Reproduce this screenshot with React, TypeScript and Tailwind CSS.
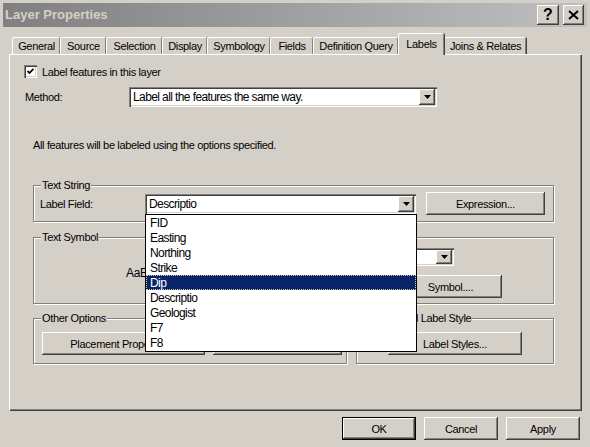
import { ReactNode } from 'react';

const raised =
  'bg-[#d4d0c8] shadow-[inset_-1px_-1px_0_#404040,inset_1px_1px_0_#fff,inset_-2px_-2px_0_#808080]';
const sunken =
  'shadow-[inset_1px_1px_0_#808080,inset_2px_2px_0_#404040,inset_-1px_-1px_0_#fff,inset_-2px_-2px_0_#d4d0c8]';

const tabs = [
  { name: 'General', w: 'w-[48px]' },
  { name: 'Source', w: 'w-[46px]' },
  { name: 'Selection', w: 'w-[56px]' },
  { name: 'Display', w: 'w-[45px]' },
  { name: 'Symbology', w: 'w-[63px]' },
  { name: 'Fields', w: 'w-[43px]' },
  { name: 'Definition Query', w: 'w-[85px]' },
  { name: 'Labels', w: 'w-[46px]', active: true },
  { name: 'Joins & Relates', w: 'w-[82px]' },
];

const fields = ['FID', 'Easting', 'Northing', 'Strike', 'Dip', 'Descriptio', 'Geologist', 'F7', 'F8'];

function Arrow() {
  return (
    <svg width="7" height="4" viewBox="0 0 7 4">
      <path d="M0 0h7L3.5 4z" fill="#000" />
    </svg>
  );
}

function Combo({ text, className }: { text: string; className: string }) {
  return (
    <div className={`flex bg-white p-[2px] ${sunken} ${className}`}>
      <div className="flex-1 flex items-center pl-[2px] text-[12px] tracking-[-0.6px] overflow-hidden whitespace-nowrap">
        {text}
      </div>
      <div className={`w-[16px] h-full flex items-center justify-center ${raised}`}>
        <Arrow />
      </div>
    </div>
  );
}

function Button({ children, className, def }: { children: ReactNode; className: string; def?: boolean }) {
  return (
    <div
      className={`flex items-center justify-center ${raised} ${def ? 'border border-black' : ''} ${className}`}
    >
      {children}
    </div>
  );
}

function Group({ title, className, children }: { title: string; className: string; children?: ReactNode }) {
  return (
    <div
      className={`relative border border-[#808080] shadow-[inset_1px_1px_0_#fff,1px_1px_0_#fff] ${className}`}
    >
      <span className="absolute top-[-8px] left-[7px] px-[1px] bg-[#d4d0c8] leading-[14px]">{title}</span>
      {children}
    </div>
  );
}

export default function App() {
  return (
    <div
      className="relative w-[590px] h-[447px] overflow-hidden bg-[#d4d0c8] text-black text-[11px] tracking-[-0.35px] leading-[14px]"
      style={{ fontFamily: '"Liberation Sans", Arial, sans-serif' }}
    >
      {/* title bar */}
      <div className="mx-[3px] mt-[3px] h-[24px] flex items-center justify-between bg-gradient-to-r from-[#808080] to-[#c0c0c0]">
        <span className="pl-[2px] text-[13px] font-bold tracking-normal text-[#d4d0c8]">Layer Properties</span>
        <div className="flex gap-[4px] pr-[3px]">
          <div className={`w-[22px] h-[20px] flex items-center justify-center text-[16px] font-bold tracking-normal ${raised}`}>
            ?
          </div>
          <div className={`w-[21px] h-[20px] flex items-center justify-center ${raised}`}>
            <svg width="11" height="10" viewBox="0 0 11 10">
              <path d="M1 1l9 8M10 1l-9 8" stroke="#000" strokeWidth="2" />
            </svg>
          </div>
        </div>
      </div>

      {/* tabs */}
      <div className="h-[27px] flex items-end pl-[12px]">
        {tabs.map((t) =>
          t.active ? (
            <div
              key={t.name}
              className={`${t.w} relative z-10 -mb-px h-[22px] flex justify-center pt-[3px] bg-[#d4d0c8] border-l border-t border-white rounded-t-[2px] shadow-[inset_-1px_0_0_#808080,1px_0_0_#404040]`}
            >
              {t.name}
            </div>
          ) : (
            <div
              key={t.name}
              className={`${t.w} h-[17px] flex items-center justify-center border-l border-t border-white rounded-t-[2px] shadow-[inset_-1px_0_0_#808080,1px_0_0_#404040]`}
            >
              {t.name}
            </div>
          )
        )}
      </div>

      {/* panel */}
      <div className="ml-[9px] w-[572px] h-[356px] border-l border-t border-white shadow-[inset_-1px_-1px_0_#808080,1px_1px_0_#404040] flex flex-col pt-[10px] pl-[14px]">
        <div className="h-[13px] flex items-center">
          <div className={`w-[13px] h-[13px] bg-white flex items-center justify-center ${sunken}`}>
            <svg width="7" height="7" viewBox="0 0 7 7">
              <path d="M0.5 3l2 2 4-4.2" stroke="#000" strokeWidth="1.8" fill="none" />
            </svg>
          </div>
          <span className="ml-[5px]">Label features in this layer</span>
        </div>

        <div className="mt-[9px] h-[20px] flex items-center">
          <span className="ml-[1px] w-[104px]">Method:</span>
          <Combo text="Label all the features the same way." className="w-[308px] h-[20px]" />
        </div>

        <div className="mt-[31px] ml-[9px]">All features will be labeled using the options specified.</div>

        <Group title="Text String" className="mt-[33px] ml-[9px] w-[521px] h-[37px] flex items-center pl-[6px]">
          <span className="w-[105px]">Label Field:</span>
          <Combo text="Descriptio" className="w-[271px] h-[20px]" />
          <Button className="ml-[10px] w-[119px] h-[23px]">Expression...</Button>
        </Group>

        <Group title="Text Symbol" className="mt-[15px] ml-[9px] w-[521px] h-[67px] flex">
          <div className="w-[215px] flex items-center pl-[92px] pt-[4px] text-[12px]">AaBbYyZz</div>
          <div className="flex flex-col pt-[10px]">
            <Combo text="Arial" className="w-[205px] h-[18px]" />
            <Button className="mt-[9px] ml-[150px] w-[103px] h-[23px]">Symbol....</Button>
          </div>
        </Group>

        <div className="mt-[14px] ml-[9px] flex">
          <Group title="Other Options" className="w-[314px] h-[46px] flex pl-[8px] pt-[13px] gap-[8px]">
            <Button className="w-[163px] h-[23px]">Placement Properties...</Button>
            <Button className="w-[129px] h-[23px]">Scale Range...</Button>
          </Group>
          <Group title="Pre-defined Label Style" className="ml-[9px] w-[198px] h-[46px] flex justify-center pt-[13px]">
            <Button className="w-[134px] h-[23px]">Label Styles...</Button>
          </Group>
        </div>
      </div>

      {/* bottom buttons */}
      <div className="mt-[7px] flex justify-end gap-[8px] pr-[10px]">
        <Button def className="w-[74px] h-[23px]">
          OK
        </Button>
        <Button className="w-[74px] h-[23px]">Cancel</Button>
        <Button className="w-[74px] h-[23px]">Apply</Button>
      </div>

      {/* open field list */}
      <div className="absolute left-[145px] top-[214px] w-[272px] h-[138px] z-20 bg-white border border-black text-[12px] tracking-[-0.6px]">
        {fields.map((f) => (
          <div
            key={f}
            className={
              f === 'Dip'
                ? 'h-[15px] flex items-center pl-[3px] bg-[#0a246a] text-white border border-dotted border-[#d8d0a0]'
                : 'h-[15px] flex items-center pl-[4px]'
            }
          >
            {f}
          </div>
        ))}
      </div>
    </div>
  );
}
